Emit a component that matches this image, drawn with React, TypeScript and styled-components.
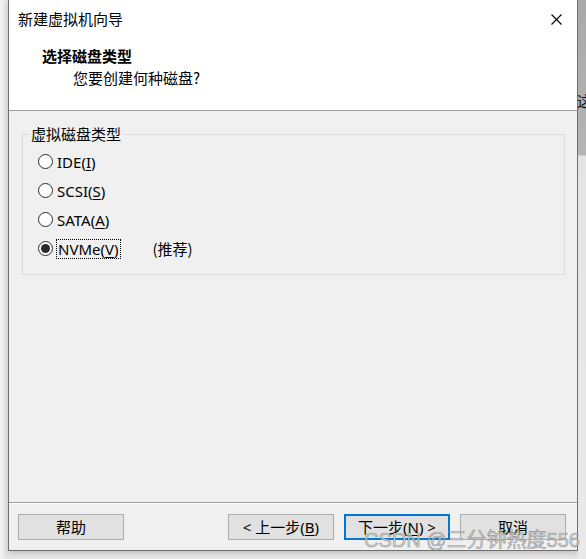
import React from "react";
import styled, { createGlobalStyle } from "styled-components";

const GlobalStyle = createGlobalStyle`
  html, body {
    margin: 0;
    padding: 0;
    background: #ebebeb;
    overflow: hidden;
  }
  * { box-sizing: border-box; }
`;

const UI_FONT = `"Segoe UI", "Noto Sans", "Noto Sans CJK SC", sans-serif`;

const Page = styled.div`
  position: relative;
  width: 586px;
  height: 559px;
  display: flex;
  align-items: flex-start;
  background: linear-gradient(to bottom, #ececec, #e6e6e6);
  font-family: ${UI_FONT};
  color: #000;
`;

const LeftGutter = styled.div`
  width: 8px;
  height: 559px;
  background: linear-gradient(to right, #f3f3f3, #e2e2e2);
`;

const Window = styled.div`
  width: 570px;
  height: 551px;
  display: flex;
  flex-direction: column;
  background: #f0f0f0;
  border: 1px solid #6f6f6f;
  border-top: none;
  box-shadow: 0 2px 6px rgba(0, 0, 0, 0.18);
`;

const RightStrip = styled.div`
  width: 8px;
  height: 559px;
  overflow: hidden;
  display: flex;
  flex-direction: column;
  background: linear-gradient(
    to bottom,
    #a9a9a9 0px,
    #b4b4b4 155px,
    #e4e4e4 156px,
    #e9e9e9 559px
  );
`;

const StripGlyph = styled.span`
  margin-top: 91px;
  margin-left: -1px;
  font-family: "Noto Sans CJK SC", sans-serif;
  font-size: 15px;
  line-height: 20px;
  white-space: nowrap;
  color: #111;
`;

const Header = styled.div`
  height: 111px;
  flex: none;
  display: flex;
  flex-direction: column;
  background: #ffffff;
  border-bottom: 1px solid #a0a0a0;
`;

const TitleBar = styled.div`
  height: 38px;
  display: flex;
  align-items: center;
  justify-content: space-between;
  padding: 0 15px 0 9px;
`;

const TitleText = styled.span`
  font-family: "Noto Sans CJK SC", sans-serif;
  font-size: 15px;
  line-height: 20px;
`;

const CloseIcon = () => (
  <svg width="11" height="11" viewBox="0 0 11 11" fill="none">
    <path d="M0.5 0.5 L10.5 10.5 M10.5 0.5 L0.5 10.5" stroke="#000" strokeWidth="1.1" />
  </svg>
);

const Heading = styled.div`
  margin-top: 8px;
  padding-left: 33px;
  font-family: "Noto Sans CJK SC", sans-serif;
  font-weight: 700;
  font-size: 15px;
  line-height: 20px;
`;

const SubHeading = styled.div`
  margin-top: 2px;
  padding-left: 64px;
  font-family: "Noto Sans CJK SC", sans-serif;
  font-size: 15px;
  line-height: 20px;
`;

const Body = styled.div`
  flex: 1;
  padding: 13px 12px 0 13px;
`;

const GroupBox = styled.fieldset`
  margin: 0;
  min-width: 0;
  border: 1px solid #dcdcdc;
  padding: 3px 0 11px 7px;
`;

const Legend = styled.legend`
  padding: 0 1px;
  font-family: "Noto Sans CJK SC", sans-serif;
  font-size: 15px;
  line-height: 20px;
`;

const RadioRow = styled.div`
  height: 29px;
  display: flex;
  align-items: center;
  padding-left: 8px;
`;

const RadioCircle = styled.span<{ $checked?: boolean }>`
  width: 15px;
  height: 15px;
  flex: none;
  border-radius: 50%;
  border: 1px solid #2b2b2b;
  background: #fff;
  display: flex;
  align-items: center;
  justify-content: center;
  &::after {
    content: "";
    width: 9px;
    height: 9px;
    border-radius: 50%;
    background: #2b2b2b;
    display: ${(p) => (p.$checked ? "block" : "none")};
  }
`;

const RadioLabel = styled.span<{ $focused?: boolean }>`
  margin-left: ${(p) => (p.$focused ? "3px" : "4px")};
  padding: 0 ${(p) => (p.$focused ? "1px" : "0")};
  font-size: 15px;
  line-height: 18px;
  border: ${(p) => (p.$focused ? "1px dotted #000" : "none")};
`;

const Hint = styled.span`
  margin-left: 32px;
  font-family: "Noto Sans CJK SC", sans-serif;
  font-size: 15px;
  line-height: 20px;
`;

const Key = styled.span`
  text-decoration: underline;
  text-underline-offset: 2px;
`;

const Footer = styled.div`
  height: 48px;
  flex: none;
  display: flex;
  align-items: flex-start;
  padding: 11px 11px 0 9px;
  border-top: 1px solid #a0a0a0;
  box-shadow: inset 0 1px 0 #ffffff;
`;

const Spacer = styled.div`
  flex: 1;
`;

const Button = styled.button<{ $primary?: boolean; $gap?: number }>`
  width: 106px;
  height: 26px;
  margin-left: ${(p) => p.$gap ?? 0}px;
  padding: 0;
  background: #e1e1e1;
  border: ${(p) => (p.$primary ? "2px solid #0078d7" : "1px solid #adadad")};
  font-family: ${UI_FONT};
  font-size: 15px;
  line-height: 20px;
  color: #000;
  display: flex;
  align-items: center;
  justify-content: center;
  white-space: pre;
`;

const Watermark = styled.div`
  position: absolute;
  left: 364px;
  top: 528px;
  font-family: "Liberation Sans", "Noto Sans CJK SC", sans-serif;
  font-size: 20px;
  line-height: 24px;
  color: rgba(205, 205, 205, 0.85);
  -webkit-text-stroke: 0.6px rgba(110, 110, 110, 0.65);
  white-space: nowrap;
  pointer-events: none;
`;

const options = [
  { name: "IDE", key: "I" },
  { name: "SCSI", key: "S" },
  { name: "SATA", key: "A" },
  { name: "NVMe", key: "V", checked: true, hint: "(推荐)" },
];

export default function App() {
  return (
    <>
      <GlobalStyle />
      <Page>
        <LeftGutter />
        <Window>
          <Header>
            <TitleBar>
              <TitleText>新建虚拟机向导</TitleText>
              <CloseIcon />
            </TitleBar>
            <Heading>选择磁盘类型</Heading>
            <SubHeading>您要创建何种磁盘?</SubHeading>
          </Header>
          <Body>
            <GroupBox>
              <Legend>虚拟磁盘类型</Legend>
              {options.map((o) => (
                <RadioRow key={o.name}>
                  <RadioCircle $checked={o.checked} />
                  <RadioLabel $focused={o.checked}>
                    {o.name}(<Key>{o.key}</Key>)
                  </RadioLabel>
                  {o.hint && <Hint>{o.hint}</Hint>}
                </RadioRow>
              ))}
            </GroupBox>
          </Body>
          <Footer>
            <Button>帮助</Button>
            <Spacer />
            <Button>
              {"< 上一步("}
              <Key>B</Key>
              {")"}
            </Button>
            <Button $primary $gap={10}>
              {"下一步("}
              <Key>N</Key>
              {") >"}
            </Button>
            <Button $gap={10}>取消</Button>
          </Footer>
        </Window>
        <RightStrip>
          <StripGlyph>这</StripGlyph>
        </RightStrip>
        <Watermark>CSDN @三分钟热度556</Watermark>
      </Page>
    </>
  );
}
